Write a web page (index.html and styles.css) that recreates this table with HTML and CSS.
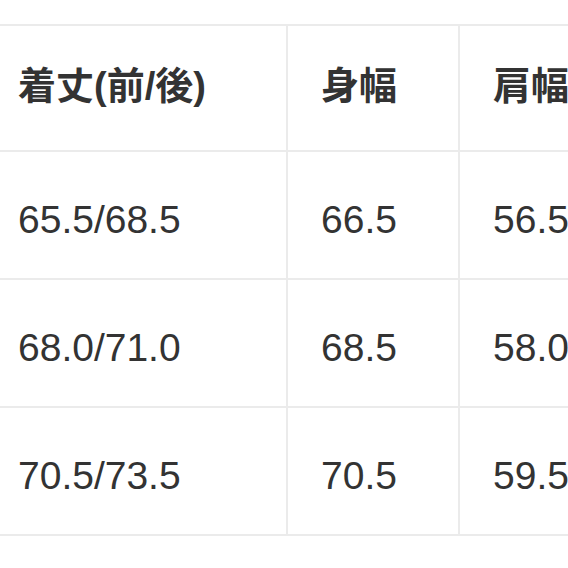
FILE: index.html
```html
<!DOCTYPE html>
<html lang="ja">
<head>
<meta charset="utf-8">
<link rel="stylesheet" href="styles.css">
</head>
<body>
<div class="size-table">
  <div class="cell head first">着丈(前/後)</div>
  <div class="cell head">身幅</div>
  <div class="cell head">肩幅</div>
  <div class="cell first">65.5/68.5</div>
  <div class="cell">66.5</div>
  <div class="cell">56.5</div>
  <div class="cell first">68.0/71.0</div>
  <div class="cell">68.5</div>
  <div class="cell">58.0</div>
  <div class="cell first">70.5/73.5</div>
  <div class="cell">70.5</div>
  <div class="cell">59.5</div>
</div>
</body>
</html>
```
FILE: styles.css
```css
html, body {
  margin: 0;
  padding: 0;
  background: #ffffff;
  overflow: hidden;
}
body {
  width: 568px;
  height: 568px;
  font-family: "Liberation Sans", Arial, "Noto Sans CJK JP", sans-serif;
  color: #333333;
}
.size-table {
  display: grid;
  grid-template-columns: 286px 170px 108px;
  grid-template-rows: 124px 126px 126px 126px;
  gap: 2px;
  padding: 2px 0;
  background: #ebebeb;
  margin-top: 24px;
  width: 568px;
  overflow: hidden;
}
.cell {
  background: #ffffff;
  display: flex;
  align-items: center;
  padding-left: 33px;
  padding-top: 10px;
  font-size: 39px;
  white-space: nowrap;
  overflow: hidden;
  min-width: 0;
}
.cell.first {
  padding-left: 18px;
}
.head {
  font-size: 38px;
  font-weight: bold;
  padding-top: 0;
  padding-bottom: 12px;
}
```
